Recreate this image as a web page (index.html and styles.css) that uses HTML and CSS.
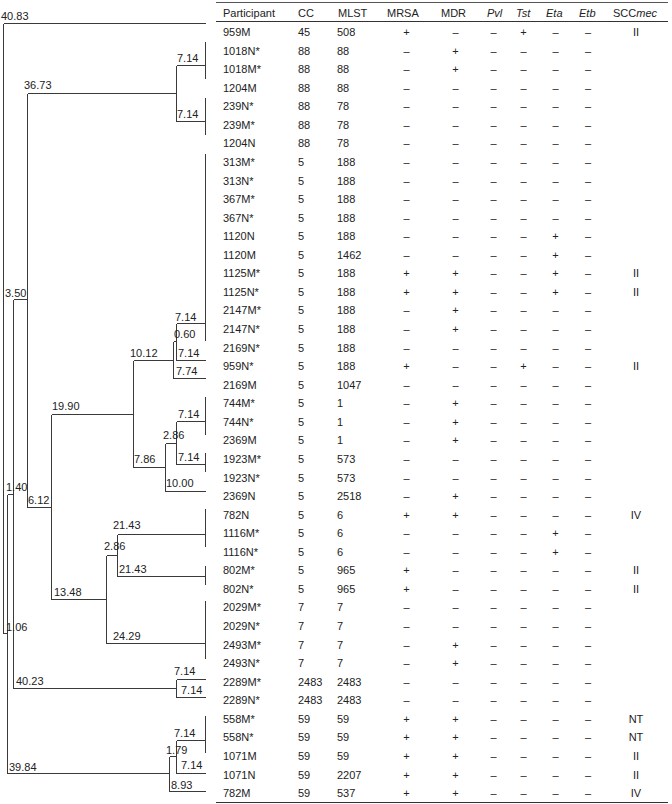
FILE: index.html
```html
<!DOCTYPE html>
<html>
<head>
<meta charset="utf-8">
<link rel="stylesheet" href="styles.css">
</head>
<body>
<div class="figure">
  <svg class="tree" width="216" height="804" viewBox="0 0 216 804">
    <path class="branches" d="M3.5 23.5V633.5 M3.5 23.5H205.5 M3.5 633.5H7.5
      M7.5 494.5V773.5 M7.5 494.5H13.5 M7.5 773.5H169.5
      M13.5 299.5V688.5 M13.5 299.5H27.5 M13.5 688.5H176.5
      M27.5 93.5V507.5 M27.5 93.5H176.5 M27.5 507.5H51.5
      M176.5 65.5V121.5 M176.5 65.5H205.5 M176.5 121.5H205.5
      M205.5 42V79 M205.5 98V135
      M51.5 414.5V599.5 M51.5 414.5H133.5 M51.5 599.5H106.5
      M133.5 360.5V467.5 M133.5 360.5H173.5 M133.5 467.5H165.5
      M173.5 341.5V378.5 M173.5 341.5H176.5 M173.5 378.5H205.5
      M176.5 323.5V360.5 M176.5 323.5H205.5 M176.5 360.5H205.5
      M205.5 154V341
      M165.5 443.5V491.5 M165.5 443.5H176.5 M165.5 491.5H205.5
      M176.5 421.5V464.5 M176.5 421.5H205.5 M176.5 464.5H205.5
      M205.5 397V435 M205.5 453V472
      M106.5 555.5V643.5 M106.5 555.5H117.5 M106.5 643.5H205.5
      M205.5 601V659
      M117.5 534.5V576.5 M117.5 534.5H205.5 M117.5 576.5H205.5
      M205.5 509V547 M205.5 566V585
      M176.5 679.5V697.5 M176.5 679.5H205.5 M176.5 697.5H205.5
      M169.5 756.5V791.5 M169.5 756.5H176.5 M169.5 791.5H205.5
      M176.5 740.5V773.5 M176.5 740.5H205.5 M176.5 773.5H205.5
      M205.5 716V753"/>
    <g class="labels">
      <text x="1" y="20">40.83</text>
      <text x="24" y="89">36.73</text>
      <text x="177" y="62">7.14</text>
      <text x="177" y="118">7.14</text>
      <text x="5" y="297">3.50</text>
      <text x="175" y="321">7.14</text>
      <text x="174" y="338">0.60</text>
      <text x="130" y="357">10.12</text>
      <text x="178" y="357">7.14</text>
      <text x="176" y="375">7.74</text>
      <text x="52" y="410">19.90</text>
      <text x="178" y="418">7.14</text>
      <text x="163" y="439">2.86</text>
      <text x="178" y="461">7.14</text>
      <text x="134" y="463">7.86</text>
      <text x="166" y="487">10.00</text>
      <text x="6" y="491">1.40</text>
      <text x="28" y="504">6.12</text>
      <text x="113" y="529">21.43</text>
      <text x="104" y="550">2.86</text>
      <text x="119" y="573">21.43</text>
      <text x="54" y="596">13.48</text>
      <text x="6" y="631">1.06</text>
      <text x="113" y="640">24.29</text>
      <text x="174" y="675">7.14</text>
      <text x="16" y="685">40.23</text>
      <text x="181" y="694">7.14</text>
      <text x="174" y="737">7.14</text>
      <text x="166" y="754">1.79</text>
      <text x="181" y="769">7.14</text>
      <text x="9" y="771">39.84</text>
      <text x="171" y="789">8.93</text>
    </g>
  </svg>
  <div class="table">
    <div class="head">
      <span>Participant</span><span>CC</span><span>MLST</span><span>MRSA</span><span>MDR</span><span><i>Pvl</i></span><span><i>Tst</i></span><span><i>Eta</i></span><span><i>Etb</i></span><span>SCC<i>mec</i></span>
    </div>
    <div class="row"><span>959M</span><span>45</span><span>508</span><span class="m">+</span><span class="m">–</span><span class="m">–</span><span class="m">+</span><span class="m">–</span><span class="m">–</span><span class="m">II</span></div>
    <div class="row"><span>1018N*</span><span>88</span><span>88</span><span class="m">–</span><span class="m">+</span><span class="m">–</span><span class="m">–</span><span class="m">–</span><span class="m">–</span><span class="m"></span></div>
    <div class="row"><span>1018M*</span><span>88</span><span>88</span><span class="m">–</span><span class="m">+</span><span class="m">–</span><span class="m">–</span><span class="m">–</span><span class="m">–</span><span class="m"></span></div>
    <div class="row"><span>1204M</span><span>88</span><span>88</span><span class="m">–</span><span class="m">–</span><span class="m">–</span><span class="m">–</span><span class="m">–</span><span class="m">–</span><span class="m"></span></div>
    <div class="row"><span>239N*</span><span>88</span><span>78</span><span class="m">–</span><span class="m">–</span><span class="m">–</span><span class="m">–</span><span class="m">–</span><span class="m">–</span><span class="m"></span></div>
    <div class="row"><span>239M*</span><span>88</span><span>78</span><span class="m">–</span><span class="m">–</span><span class="m">–</span><span class="m">–</span><span class="m">–</span><span class="m">–</span><span class="m"></span></div>
    <div class="row"><span>1204N</span><span>88</span><span>78</span><span class="m">–</span><span class="m">–</span><span class="m">–</span><span class="m">–</span><span class="m">–</span><span class="m">–</span><span class="m"></span></div>
    <div class="row"><span>313M*</span><span>5</span><span>188</span><span class="m">–</span><span class="m">–</span><span class="m">–</span><span class="m">–</span><span class="m">–</span><span class="m">–</span><span class="m"></span></div>
    <div class="row"><span>313N*</span><span>5</span><span>188</span><span class="m">–</span><span class="m">–</span><span class="m">–</span><span class="m">–</span><span class="m">–</span><span class="m">–</span><span class="m"></span></div>
    <div class="row"><span>367M*</span><span>5</span><span>188</span><span class="m">–</span><span class="m">–</span><span class="m">–</span><span class="m">–</span><span class="m">–</span><span class="m">–</span><span class="m"></span></div>
    <div class="row"><span>367N*</span><span>5</span><span>188</span><span class="m">–</span><span class="m">–</span><span class="m">–</span><span class="m">–</span><span class="m">–</span><span class="m">–</span><span class="m"></span></div>
    <div class="row"><span>1120N</span><span>5</span><span>188</span><span class="m">–</span><span class="m">–</span><span class="m">–</span><span class="m">–</span><span class="m">+</span><span class="m">–</span><span class="m"></span></div>
    <div class="row"><span>1120M</span><span>5</span><span>1462</span><span class="m">–</span><span class="m">–</span><span class="m">–</span><span class="m">–</span><span class="m">+</span><span class="m">–</span><span class="m"></span></div>
    <div class="row"><span>1125M*</span><span>5</span><span>188</span><span class="m">+</span><span class="m">+</span><span class="m">–</span><span class="m">–</span><span class="m">+</span><span class="m">–</span><span class="m">II</span></div>
    <div class="row"><span>1125N*</span><span>5</span><span>188</span><span class="m">+</span><span class="m">+</span><span class="m">–</span><span class="m">–</span><span class="m">+</span><span class="m">–</span><span class="m">II</span></div>
    <div class="row"><span>2147M*</span><span>5</span><span>188</span><span class="m">–</span><span class="m">+</span><span class="m">–</span><span class="m">–</span><span class="m">–</span><span class="m">–</span><span class="m"></span></div>
    <div class="row"><span>2147N*</span><span>5</span><span>188</span><span class="m">–</span><span class="m">+</span><span class="m">–</span><span class="m">–</span><span class="m">–</span><span class="m">–</span><span class="m"></span></div>
    <div class="row"><span>2169N*</span><span>5</span><span>188</span><span class="m">–</span><span class="m">–</span><span class="m">–</span><span class="m">–</span><span class="m">–</span><span class="m">–</span><span class="m"></span></div>
    <div class="row"><span>959N*</span><span>5</span><span>188</span><span class="m">+</span><span class="m">–</span><span class="m">–</span><span class="m">+</span><span class="m">–</span><span class="m">–</span><span class="m">II</span></div>
    <div class="row"><span>2169M</span><span>5</span><span>1047</span><span class="m">–</span><span class="m">–</span><span class="m">–</span><span class="m">–</span><span class="m">–</span><span class="m">–</span><span class="m"></span></div>
    <div class="row"><span>744M*</span><span>5</span><span>1</span><span class="m">–</span><span class="m">+</span><span class="m">–</span><span class="m">–</span><span class="m">–</span><span class="m">–</span><span class="m"></span></div>
    <div class="row"><span>744N*</span><span>5</span><span>1</span><span class="m">–</span><span class="m">+</span><span class="m">–</span><span class="m">–</span><span class="m">–</span><span class="m">–</span><span class="m"></span></div>
    <div class="row"><span>2369M</span><span>5</span><span>1</span><span class="m">–</span><span class="m">+</span><span class="m">–</span><span class="m">–</span><span class="m">–</span><span class="m">–</span><span class="m"></span></div>
    <div class="row"><span>1923M*</span><span>5</span><span>573</span><span class="m">–</span><span class="m">–</span><span class="m">–</span><span class="m">–</span><span class="m">–</span><span class="m">–</span><span class="m"></span></div>
    <div class="row"><span>1923N*</span><span>5</span><span>573</span><span class="m">–</span><span class="m">–</span><span class="m">–</span><span class="m">–</span><span class="m">–</span><span class="m">–</span><span class="m"></span></div>
    <div class="row"><span>2369N</span><span>5</span><span>2518</span><span class="m">–</span><span class="m">+</span><span class="m">–</span><span class="m">–</span><span class="m">–</span><span class="m">–</span><span class="m"></span></div>
    <div class="row"><span>782N</span><span>5</span><span>6</span><span class="m">+</span><span class="m">+</span><span class="m">–</span><span class="m">–</span><span class="m">–</span><span class="m">–</span><span class="m">IV</span></div>
    <div class="row"><span>1116M*</span><span>5</span><span>6</span><span class="m">–</span><span class="m">–</span><span class="m">–</span><span class="m">–</span><span class="m">+</span><span class="m">–</span><span class="m"></span></div>
    <div class="row"><span>1116N*</span><span>5</span><span>6</span><span class="m">–</span><span class="m">–</span><span class="m">–</span><span class="m">–</span><span class="m">+</span><span class="m">–</span><span class="m"></span></div>
    <div class="row"><span>802M*</span><span>5</span><span>965</span><span class="m">+</span><span class="m">–</span><span class="m">–</span><span class="m">–</span><span class="m">–</span><span class="m">–</span><span class="m">II</span></div>
    <div class="row"><span>802N*</span><span>5</span><span>965</span><span class="m">+</span><span class="m">–</span><span class="m">–</span><span class="m">–</span><span class="m">–</span><span class="m">–</span><span class="m">II</span></div>
    <div class="row"><span>2029M*</span><span>7</span><span>7</span><span class="m">–</span><span class="m">–</span><span class="m">–</span><span class="m">–</span><span class="m">–</span><span class="m">–</span><span class="m"></span></div>
    <div class="row"><span>2029N*</span><span>7</span><span>7</span><span class="m">–</span><span class="m">–</span><span class="m">–</span><span class="m">–</span><span class="m">–</span><span class="m">–</span><span class="m"></span></div>
    <div class="row"><span>2493M*</span><span>7</span><span>7</span><span class="m">–</span><span class="m">+</span><span class="m">–</span><span class="m">–</span><span class="m">–</span><span class="m">–</span><span class="m"></span></div>
    <div class="row"><span>2493N*</span><span>7</span><span>7</span><span class="m">–</span><span class="m">+</span><span class="m">–</span><span class="m">–</span><span class="m">–</span><span class="m">–</span><span class="m"></span></div>
    <div class="row"><span>2289M*</span><span>2483</span><span>2483</span><span class="m">–</span><span class="m">–</span><span class="m">–</span><span class="m">–</span><span class="m">–</span><span class="m">–</span><span class="m"></span></div>
    <div class="row"><span>2289N*</span><span>2483</span><span>2483</span><span class="m">–</span><span class="m">–</span><span class="m">–</span><span class="m">–</span><span class="m">–</span><span class="m">–</span><span class="m"></span></div>
    <div class="row"><span>558M*</span><span>59</span><span>59</span><span class="m">+</span><span class="m">+</span><span class="m">–</span><span class="m">–</span><span class="m">–</span><span class="m">–</span><span class="m">NT</span></div>
    <div class="row"><span>558N*</span><span>59</span><span>59</span><span class="m">+</span><span class="m">+</span><span class="m">–</span><span class="m">–</span><span class="m">–</span><span class="m">–</span><span class="m">NT</span></div>
    <div class="row"><span>1071M</span><span>59</span><span>59</span><span class="m">+</span><span class="m">+</span><span class="m">–</span><span class="m">–</span><span class="m">–</span><span class="m">–</span><span class="m">II</span></div>
    <div class="row"><span>1071N</span><span>59</span><span>2207</span><span class="m">+</span><span class="m">+</span><span class="m">–</span><span class="m">–</span><span class="m">–</span><span class="m">–</span><span class="m">II</span></div>
    <div class="row"><span>782M</span><span>59</span><span>537</span><span class="m">+</span><span class="m">+</span><span class="m">–</span><span class="m">–</span><span class="m">–</span><span class="m">–</span><span class="m">IV</span></div>
  </div>
</div>
</body>
</html>
```

FILE: styles.css
```css
html, body {
  margin: 0;
  padding: 0;
  background: #ffffff;
}

body {
  font-family: "Liberation Sans", Arial, sans-serif;
  font-size: 11px;
  color: #222222;
}

.figure {
  display: flex;
  width: 672px;
  height: 804px;
  overflow: hidden;
}

.tree {
  flex: none;
  display: block;
  width: 216px;
  height: 804px;
}

.branches {
  fill: none;
  stroke: #3a3a3a;
  stroke-width: 1;
  shape-rendering: crispEdges;
}

.labels text {
  font-family: "Liberation Sans", Arial, sans-serif;
  font-size: 11px;
  fill: #222222;
}

.table {
  flex: none;
  align-self: flex-start;
  width: 452px;
  margin-top: 2px;
  border-top: 1px solid #555555;
  border-bottom: 1px solid #333333;
}

.head {
  display: grid;
  grid-template-columns: 82px 40px 49px 54px 46px 29px 30px 33px 34px 55px;
  height: 19px;
  box-sizing: border-box;
  padding-top: 2px;
  line-height: 16px;
  border-bottom: 1px solid #333333;
  white-space: nowrap;
}

.head span:first-child,
.row span:first-child {
  padding-left: 7px;
}

.row {
  display: grid;
  grid-template-columns: 82px 39px 49px 41px 57px 19px 41px 23px 42px 54px;
  height: 18.57px;
  line-height: 20px;
  white-space: nowrap;
}

.row .m {
  text-align: center;
}
```
